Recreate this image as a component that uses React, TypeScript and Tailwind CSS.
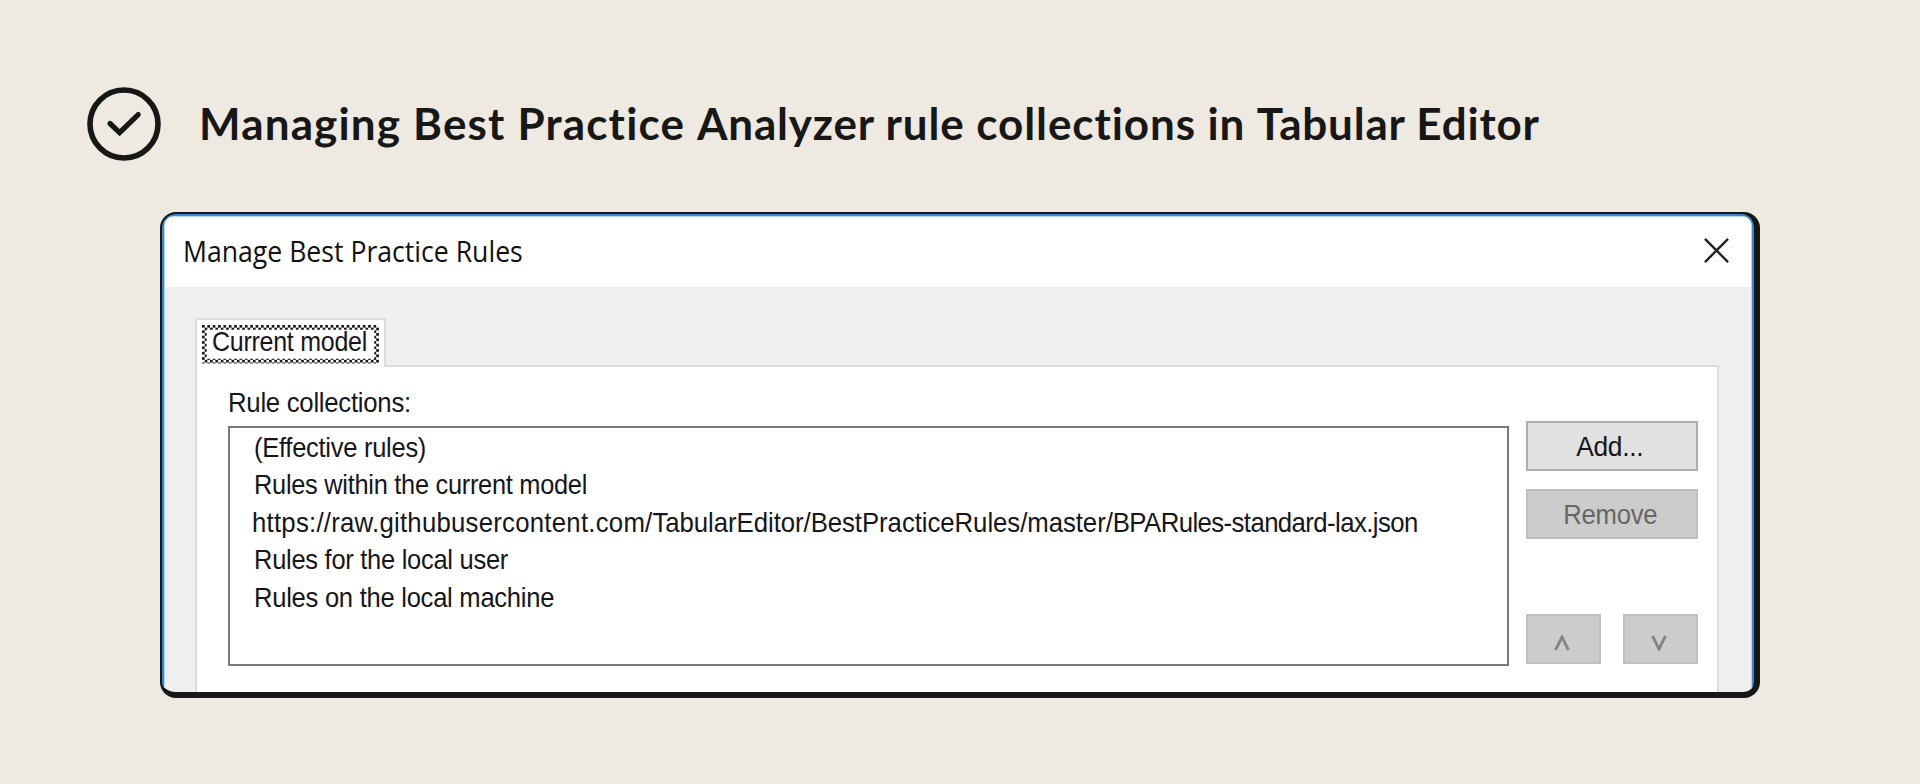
// App.tsx
import React from 'react';

const collections = [
  { label: '(Effective rules)', className: 'ml-0.5 scale-x-[0.911]' },
  { label: 'Rules within the current model', className: 'ml-0.5 scale-x-[0.906]' },
  {
    label: (
      <>
        <span className="tracking-[0.26px]">https://raw.githubusercontent.com/</span>
        <span className="tracking-[-0.06px]">TabularEditor/BestPracticeRules/master/</span>
        <span className="tracking-[-0.64px]">BPARules-standard-lax.json</span>
      </>
    ),
    className: 'ml-0 scale-x-[0.92]',
  },
  { label: 'Rules for the local user', className: 'ml-0.5 scale-x-[0.91]' },
  { label: 'Rules on the local machine', className: 'ml-0.5 scale-x-[0.914]' },
];

const CheckCircle = () => (
  <svg width="76" height="76" viewBox="0 0 76 76" fill="none" stroke="#171717">
    <circle cx="38" cy="38" r="34" strokeWidth="5.6" />
    <path d="M24 37.5L33.6 46.6L52.2 28.6" strokeWidth="5.2" strokeLinecap="round" />
  </svg>
);

// dotted keyboard focus frame around the tab label
const FocusFrame = () => (
  <svg className="absolute left-[5px] top-[5px]" width="178" height="40" viewBox="0 0 178 40">
    <defs>
      <pattern id="dots" width="5.36" height="5.36" patternUnits="userSpaceOnUse">
        <rect width="2.68" height="2.68" fill="#1c1c1c" />
        <rect x="2.68" y="2.68" width="2.68" height="2.68" fill="#1c1c1c" />
      </pattern>
    </defs>
    <path d="M0 0H177V38.5H0ZM4.7 4.7V33.8H172.3V4.7Z" fill="url(#dots)" fillRule="evenodd" />
  </svg>
);

interface DialogButtonProps {
  className: string;
  children: React.ReactNode;
}

const DialogButton: React.FC<DialogButtonProps> = ({ className, children }) => (
  <button className={`flex items-center justify-center border-2 h-[50px] ${className}`}>
    {children}
  </button>
);

const App: React.FC = () => {
  return (
    <main className="h-[784px] w-[1920px] overflow-hidden bg-[#eee9e1] pt-[86px]">
      <header className="flex items-center h-[76px] pl-[86px]">
        <CheckCircle />
        <h1 className="-mt-[3px] ml-[37px] font-[Lato,sans-serif] text-[44px] leading-[52px] font-bold whitespace-nowrap text-[#171717]">
          <span className="tracking-[1.16px]">Managing Best Practice </span>
          <span className="tracking-[0.8px]">Analyzer </span>
          <span className="tracking-[0.9px]">rule collections in </span>
          <span className="tracking-[0.8px]">Tabular Editor</span>
        </h1>
      </header>

      <section className="mt-[50px] ml-[160px] h-[486px] w-[1600px] overflow-hidden rounded-2xl border-t-2 border-r-[6px] border-b-[6px] border-l-2 border-[#171717] bg-[#171717]">
        <div className="h-full overflow-hidden rounded-t-[13px] border-x-2 border-t-2 border-[#3c86d6] bg-[#efefef]">
          <div className="h-full border-x border-t border-[#b5d3f1]">
            <div className="flex items-center justify-between h-[70px] bg-white pl-[18px] pr-[22px]">
              <h2 className="-mt-[3px] origin-left scale-x-[0.918] font-['Open_Sans',sans-serif] text-[29px] leading-9 whitespace-nowrap text-[#111]">
                Manage Best Practice Rules
              </h2>
              <svg className="-mt-1" width="25" height="25" viewBox="0 0 26 26" stroke="#222" strokeWidth="2.5">
                <path d="M1 1L25 25M25 1L1 25" />
              </svg>
            </div>

            <div className="pt-[31px] pl-[30px] font-['Liberation_Sans',Arial,sans-serif] text-[28px] leading-[37.6px] tracking-[-0.3px] text-[#16161c]">
              <div className="relative z-10 -mb-0.5 h-[49px] w-[191px] border-2 border-b-0 border-[#dcdcdc] bg-white pl-[15px] pt-[3px]">
                <span className="inline-block origin-left scale-x-[0.893] whitespace-nowrap">Current model</span>
                <FocusFrame />
              </div>

              <div className="flex h-[340px] w-[1524px] border-2 border-[#dcdcdc] bg-white pl-[31px]">
                <div className="pt-[17px]">
                  <p className="w-fit origin-left scale-x-[0.92] whitespace-nowrap">Rule collections:</p>
                  <ul className="mt-1 h-[240px] w-[1281px] border-2 border-[#7a7a7a] pl-[22px] pt-px">
                    {collections.map((item, i) => (
                      <li key={i} className={`w-fit origin-left whitespace-nowrap ${item.className}`}>
                        {item.label}
                      </li>
                    ))}
                  </ul>
                </div>

                <div className="ml-[17px] w-[172px] pt-[54px]">
                  <DialogButton className="w-full border-[#adadad] bg-[#e1e1e1]">
                    <span className="mt-0.5 -ml-1 scale-x-[0.94]">Add...</span>
                  </DialogButton>
                  <DialogButton className="mt-[18px] w-full border-[#bfbfbf] bg-[#cccccc] text-[#666]">
                    <span className="mt-0.5 -ml-[3px] scale-x-[0.917]">Remove</span>
                  </DialogButton>
                  <div className="flex justify-between mt-[75px]">
                    <DialogButton className="w-[75px] border-[#bfbfbf] bg-[#cccccc]">
                      <svg className="mt-2 -ml-[3px]" width="16" height="16" viewBox="0 0 16 16" fill="none" stroke="#858585" strokeWidth="2.8">
                        <path d="M1.5 15L8 2L14.5 15" />
                      </svg>
                    </DialogButton>
                    <DialogButton className="w-[75px] border-[#bfbfbf] bg-[#cccccc]">
                      <svg className="mt-2 -ml-[3px]" width="16" height="16" viewBox="0 0 16 16" fill="none" stroke="#858585" strokeWidth="2.8">
                        <path d="M1.5 1L8 14L14.5 1" />
                      </svg>
                    </DialogButton>
                  </div>
                </div>
              </div>
            </div>
          </div>
        </div>
      </section>
    </main>
  );
};

export default App;
